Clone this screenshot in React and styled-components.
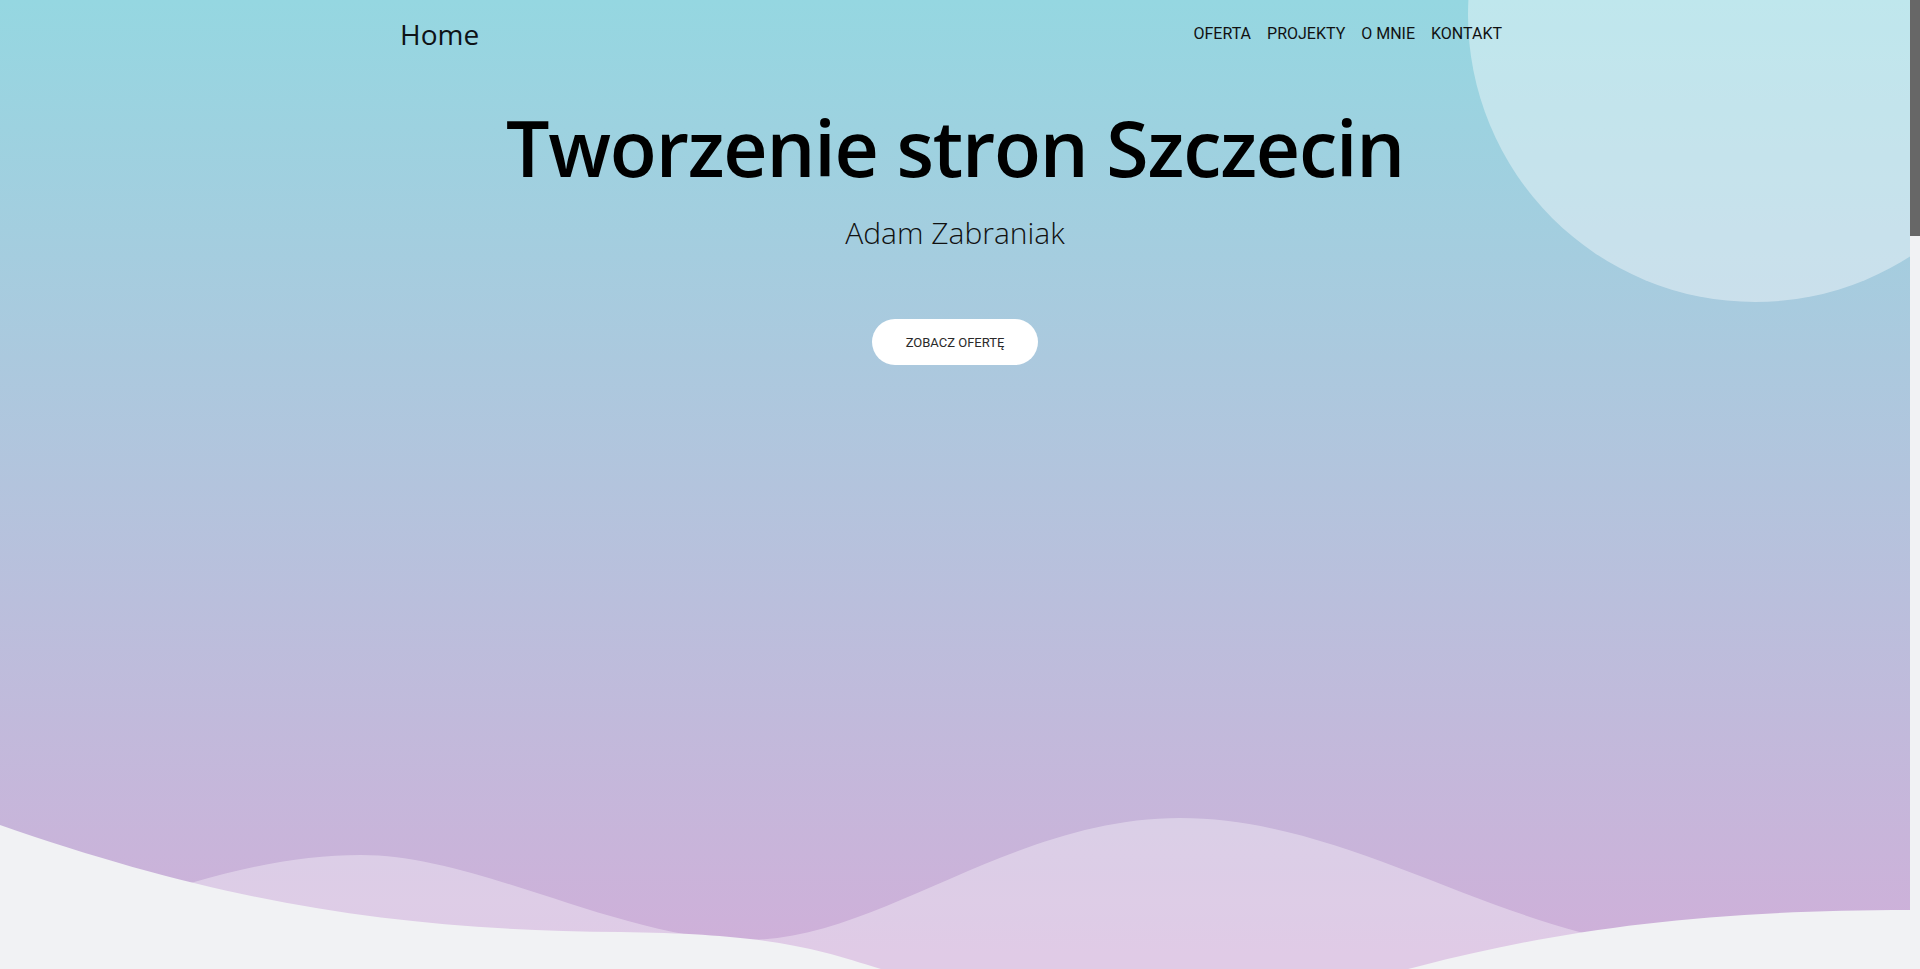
import React from "react";
import styled, { createGlobalStyle } from "styled-components";

const GlobalStyle = createGlobalStyle`
  html, body {
    margin: 0;
    padding: 0;
    background: #f1f2f4;
  }
  body {
    font-family: "Open Sans", "Noto Sans", sans-serif;
    color: #000;
    overflow: hidden;
  }
`;

const Page = styled.div`
  margin-right: 10px;
`;

const ScrollTrack = styled.div`
  position: fixed;
  top: 0;
  right: 0;
  width: 10px;
  height: 100vh;
  background: #f1f2f4;
  z-index: 10;
`;

const ScrollThumb = styled.div`
  width: 10px;
  height: 236px;
  background: #676767;
`;

const Hero = styled.header`
  position: relative;
  height: 969px;
  overflow: hidden;
  background: linear-gradient(to bottom, #95d7e1 0%, #b3c4dd 50%, #d0afd9 100%);
`;

const Bubble = styled.div`
  position: absolute;
  left: calc(100% - 442px);
  top: -272px;
  width: 574px;
  height: 574px;
  border-radius: 50%;
  background: rgba(255, 255, 255, 0.4);
`;

const NavBar = styled.nav`
  position: relative;
  z-index: 1;
  max-width: 1110px;
  margin: 0 auto;
  padding-top: 14px;
  display: flex;
  justify-content: space-between;
  align-items: center;
`;

const Brand = styled.a`
  font-family: "Open Sans", "Noto Sans", sans-serif;
  font-size: 28px;
  line-height: 40px;
  color: #0e1216;
  text-decoration: none;
`;

const NavList = styled.ul`
  display: flex;
  list-style: none;
  margin: 0;
  padding: 0;
`;

const NavLink = styled.a`
  display: block;
  padding: 0 8px;
  font-family: Roboto, "Liberation Sans", sans-serif;
  font-size: 16px;
  line-height: 24px;
  color: #111;
  text-decoration: none;
  text-transform: uppercase;
`;

const Intro = styled.section`
  position: relative;
  z-index: 1;
  display: flex;
  flex-direction: column;
  align-items: center;
  padding-top: 48px;
`;

const Title = styled.h1`
  margin: 0;
  font-family: "Open Sans", "Noto Sans", sans-serif;
  font-weight: 600;
  font-size: 77px;
  line-height: 1.2;
  letter-spacing: -1.2px;
  color: #000;
`;

const Subtitle = styled.p`
  margin: 21px 0 0;
  font-family: "Open Sans", "Noto Sans", sans-serif;
  font-weight: 300;
  font-size: 30px;
  line-height: 1.2;
  color: #111;
`;

const CtaButton = styled.a`
  margin-top: 68px;
  height: 46px;
  padding: 0 34px;
  display: inline-flex;
  align-items: center;
  border-radius: 23px;
  background: #fff;
  font-family: Roboto, "Liberation Sans", sans-serif;
  font-weight: 400;
  font-size: 13px;
  color: #2a2a2a;
  text-decoration: none;
  text-transform: uppercase;
`;

const Waves = styled.svg`
  position: absolute;
  left: 0;
  bottom: 0;
  width: 100%;
  height: 189px;
  display: block;
`;

export default function App() {
  return (
    <>
      <GlobalStyle />
      <Page>
        <Hero>
          <Bubble />
          <NavBar>
            <Brand href="#">Home</Brand>
            <NavList>
              <li><NavLink href="#">Oferta</NavLink></li>
              <li><NavLink href="#">Projekty</NavLink></li>
              <li><NavLink href="#">O mnie</NavLink></li>
              <li><NavLink href="#">Kontakt</NavLink></li>
            </NavList>
          </NavBar>
          <Intro>
            <Title>Tworzenie stron Szczecin</Title>
            <Subtitle>Adam Zabraniak</Subtitle>
            <CtaButton href="#">Zobacz ofertę</CtaButton>
          </Intro>
          <Waves viewBox="0 780 1910 189" preserveAspectRatio="none">
            <path
              fill="rgba(255,255,255,0.35)"
              d="M0,960 C120,900 250,855 361,855 C480,855 620,940 747,940 C880,940 1010,818 1180,818 C1340,818 1480,920 1640,945 L1910,1020 L1910,1100 L0,1100 Z"
            />
            <path
              fill="#f1f2f4"
              d="M0,825 C230,905 400,930 620,932 C780,934 820,950 900,975 C1050,1020 1250,1010 1420,966 C1560,930 1700,910 1910,910 L1910,1100 L0,1100 Z"
            />
          </Waves>
        </Hero>
      </Page>
      <ScrollTrack>
        <ScrollThumb />
      </ScrollTrack>
    </>
  );
}
